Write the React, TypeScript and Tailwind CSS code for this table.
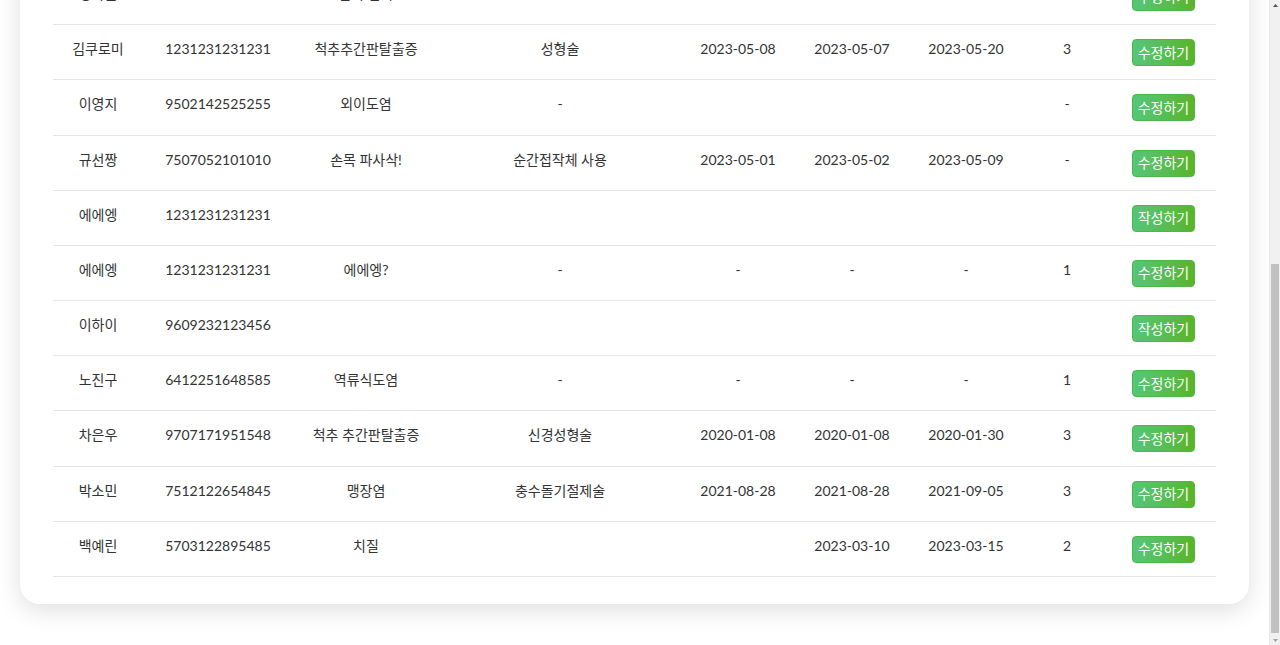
import {useEffect, useRef} from 'react';

type Patient = {
    name: string;
    rrn: string;
    diagnosis?: string;
    surgery?: string;
    admit?: string;
    op?: string;
    discharge?: string;
    count?: string;
    written: boolean;
};

const PATIENTS: Patient[] = [
    {name: '김철수', rrn: '8801011234567', diagnosis: '요추 추간판탈출증', surgery: '미세현미경 수술', admit: '2023-04-02', op: '2023-04-03', discharge: '2023-04-12', count: '2', written: true},
    {name: '홍길동', rrn: '9203152345678', diagnosis: '회전근개 파열', surgery: '관절경 봉합술', admit: '2023-04-10', op: '2023-04-11', discharge: '2023-04-18', count: '1', written: true},
    {name: '이민지', rrn: '9911112123456', written: false},
    {name: '박서준', rrn: '8507071234567', diagnosis: '무릎 연골손상', surgery: '-', admit: '-', op: '-', discharge: '-', count: '1', written: true},
    {name: '최유나', rrn: '0102034123456', diagnosis: '손목 골절', surgery: '금속판 고정술', admit: '2023-05-03', op: '2023-05-04', discharge: '2023-05-10', count: '2', written: true},
    {name: '정하늘', rrn: '1231231231231', diagnosis: '발목 염좌', surgery: '-', admit: '-', op: '-', discharge: '-', count: '-', written: true},
    {name: '김쿠로미', rrn: '1231231231231', diagnosis: '척추추간판탈출증', surgery: '성형술', admit: '2023-05-08', op: '2023-05-07', discharge: '2023-05-20', count: '3', written: true},
    {name: '이영지', rrn: '9502142525255', diagnosis: '외이도염', surgery: '-', count: '-', written: true},
    {name: '규선짱', rrn: '7507052101010', diagnosis: '손목 파사삭!', surgery: '순간접작체 사용', admit: '2023-05-01', op: '2023-05-02', discharge: '2023-05-09', count: '-', written: true},
    {name: '에에엥', rrn: '1231231231231', written: false},
    {name: '에에엥', rrn: '1231231231231', diagnosis: '에에엥?', surgery: '-', admit: '-', op: '-', discharge: '-', count: '1', written: true},
    {name: '이하이', rrn: '9609232123456', written: false},
    {name: '노진구', rrn: '6412251648585', diagnosis: '역류식도염', surgery: '-', admit: '-', op: '-', discharge: '-', count: '1', written: true},
    {name: '차은우', rrn: '9707171951548', diagnosis: '척추 추간판탈출증', surgery: '신경성형술', admit: '2020-01-08', op: '2020-01-08', discharge: '2020-01-30', count: '3', written: true},
    {name: '박소민', rrn: '7512122654845', diagnosis: '맹장염', surgery: '충수돌기절제술', admit: '2021-08-28', op: '2021-08-28', discharge: '2021-09-05', count: '3', written: true},
    {name: '백예린', rrn: '5703122895485', diagnosis: '치질', op: '2023-03-10', discharge: '2023-03-15', count: '2', written: true},
];

const HEADERS = ['이름', '주민등록번호', '진단명', '수술명', '입원일', '수술일', '퇴원일', '차수', '관리'];

const GRID = 'grid grid-cols-[90px_150px_146px_242px_114px_114px_114px_88px_105px]';

// browser scrollbar, drawn since the headless shot hides the real one
function ScrollBar() {
    return (
        <div className="w-[11px] h-full bg-[#f1f1f1] border-l border-[#e8e8e8] flex flex-col items-center">
            <div className="h-[10px] flex items-center justify-center">
                <svg width="5" height="3" viewBox="0 0 5 3"><path d="M2.5 0L5 3H0z" fill="#505050"/></svg>
            </div>
            <div className="flex-1 w-full flex flex-col px-[1px]">
                <div className="h-[254px]"/>
                <div className="h-[369px] w-full bg-[#c1c1c1]"/>
            </div>
            <div className="h-[10px] flex items-center justify-center">
                <svg width="5" height="3" viewBox="0 0 5 3"><path d="M0 0H5L2.5 3z" fill="#a3a3a3"/></svg>
            </div>
        </div>
    );
}

export default function App() {
    const scroller = useRef<HTMLDivElement>(null);

    // the shot is of the bottom of the list
    useEffect(() => {
        const el = scroller.current;
        if (el) el.scrollTop = el.scrollHeight;
    }, []);

    return (
        <div className="h-screen flex bg-white text-[14px] text-[#333] font-['Lato','Noto_Sans_CJK_KR',sans-serif]">
            <div ref={scroller} className="flex-1 h-full overflow-y-scroll [scrollbar-width:none]">
                <div className="px-5 pt-10 pb-[41px]">
                    <div className="bg-white rounded-[20px] shadow-[0_6px_24px_rgba(0,0,0,0.13)] px-[33px] pt-8 pb-[27px]">
                        <div className="flex items-center justify-between mb-6">
                            <h2 className="text-xl font-bold text-[#222]">환자 목록</h2>
                            <button className="px-3 py-1 rounded border border-[#4fb548] text-[#3fa53a] text-sm">환자 등록</button>
                        </div>

                        <div className={`${GRID} h-[48px] items-center text-center font-bold border-b-2 border-[#dee2e6]`}>
                            {HEADERS.map(h => <div key={h}>{h}</div>)}
                        </div>

                        {PATIENTS.map((p, i) => (
                            <div key={i}
                                 className={`${GRID} h-[55.2px] text-center leading-[21px] ${i > 0 ? 'border-t border-[#e3e6ea]' : ''}`}>
                                <div className="pt-[13px]">{p.name}</div>
                                <div className="pt-[13px]">{p.rrn}</div>
                                <div className="pt-[13px]">{p.diagnosis ?? ''}</div>
                                <div className="pt-[13px]">{p.surgery ?? ''}</div>
                                <div className="pt-[13px]">{p.admit ?? ''}</div>
                                <div className="pt-[13px]">{p.op ?? ''}</div>
                                <div className="pt-[13px]">{p.discharge ?? ''}</div>
                                <div className="pt-[13px]">{p.count ?? ''}</div>
                                <div className="pt-[14px] flex justify-center">
                                    <button
                                        className="h-[27px] px-[5px] rounded-[4px] border border-[#4db84a] bg-linear-to-r from-[#55c678] to-[#5ab424] text-white leading-none">
                                        {p.written ? '수정하기' : '작성하기'}
                                    </button>
                                </div>
                            </div>
                        ))}
                        <div className="border-t border-[#e3e6ea]"/>
                    </div>
                </div>
            </div>
            <ScrollBar/>
        </div>
    );
}
